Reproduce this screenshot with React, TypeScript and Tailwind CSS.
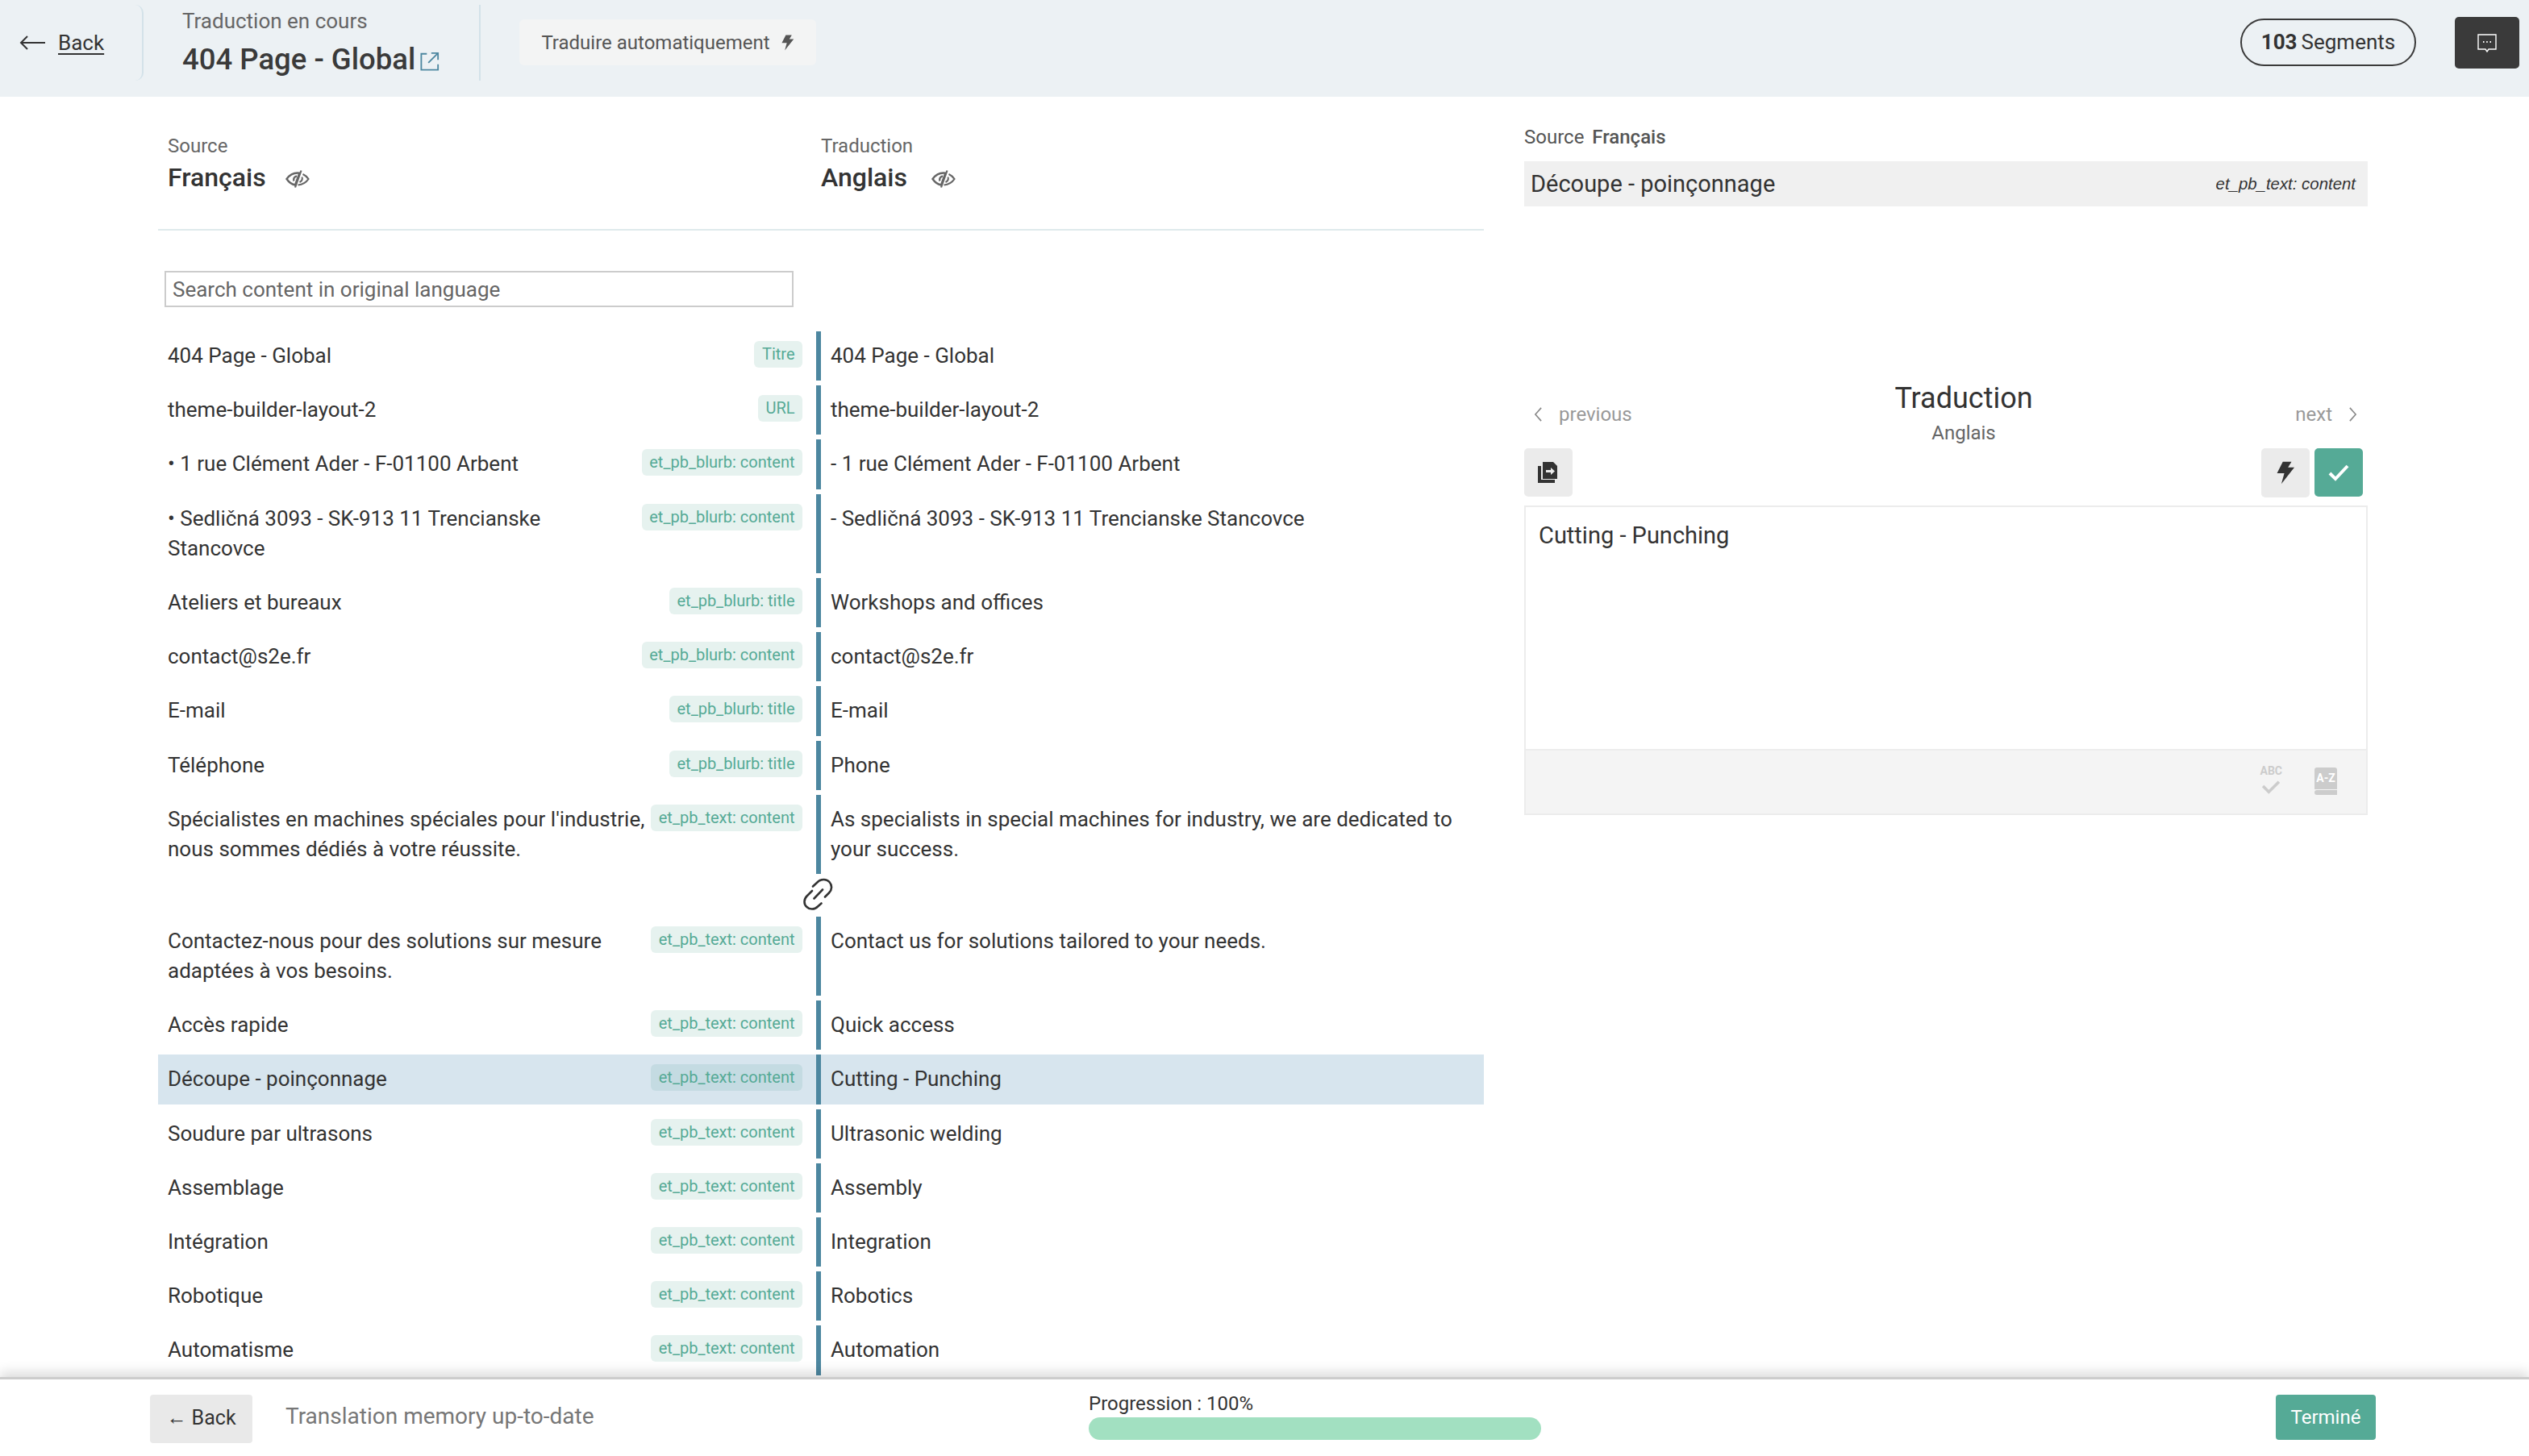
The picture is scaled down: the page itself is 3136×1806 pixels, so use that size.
import React from 'react';

type Row = { source: string; tag: string; target: string; selected?: boolean };

const rows: Row[] = [
    { source: '404 Page - Global', tag: 'Titre', target: '404 Page - Global' },
    { source: 'theme-builder-layout-2', tag: 'URL', target: 'theme-builder-layout-2' },
    { source: '• 1 rue Clément Ader - F-01100 Arbent', tag: 'et_pb_blurb: content', target: '- 1 rue Clément Ader - F-01100 Arbent' },
    { source: '• Sedličná 3093 - SK-913 11 Trencianske Stancovce', tag: 'et_pb_blurb: content', target: '- Sedličná 3093 - SK-913 11 Trencianske Stancovce' },
    { source: 'Ateliers et bureaux', tag: 'et_pb_blurb: title', target: 'Workshops and offices' },
    { source: 'contact@s2e.fr', tag: 'et_pb_blurb: content', target: 'contact@s2e.fr' },
    { source: 'E-mail', tag: 'et_pb_blurb: title', target: 'E-mail' },
    { source: 'Téléphone', tag: 'et_pb_blurb: title', target: 'Phone' },
    { source: "Spécialistes en machines spéciales pour l'industrie, nous sommes dédiés à votre réussite.", tag: 'et_pb_text: content', target: 'As specialists in special machines for industry, we are dedicated to your success.' },
];

const rowsAfterLink: Row[] = [
    { source: 'Contactez-nous pour des solutions sur mesure adaptées à vos besoins.', tag: 'et_pb_text: content', target: 'Contact us for solutions tailored to your needs.' },
    { source: 'Accès rapide', tag: 'et_pb_text: content', target: 'Quick access' },
    { source: 'Découpe - poinçonnage', tag: 'et_pb_text: content', target: 'Cutting - Punching', selected: true },
    { source: 'Soudure par ultrasons', tag: 'et_pb_text: content', target: 'Ultrasonic welding' },
    { source: 'Assemblage', tag: 'et_pb_text: content', target: 'Assembly' },
    { source: 'Intégration', tag: 'et_pb_text: content', target: 'Integration' },
    { source: 'Robotique', tag: 'et_pb_text: content', target: 'Robotics' },
    { source: 'Automatisme', tag: 'et_pb_text: content', target: 'Automation' },
];

const Bolt: React.FC<{ className?: string }> = ({ className }) => (
    <svg viewBox="0 0 21 27" className={className} fill="currentColor">
        <path d="M7 .7h10l-4 6.600h7.300L5.300 26.300 8.700 14H.3z" />
    </svg>
);

const EyeOff: React.FC<{ className?: string }> = ({ className }) => (
    <svg viewBox="0 0 30 24" className={`mt-[4px] h-[24px] w-[30px] text-[#666] ${className}`} fill="none" stroke="currentColor">
        <path d="M1.500 12C5 7 9.500 4.500 15 4.500c1 0 1.600.1 2.400.2L12 19.500C7.600 18.600 4.200 16 1.500 12z" strokeWidth="2.400" />
        <path d="M14 8.500c-3 .5-4.600 3-3.600 6" strokeWidth="2.400" />
        <path d="M21.500 6c3 1.400 5.300 3.500 7 6-3 4.500-7.500 7-13 7.500" strokeWidth="2.200" />
        <path d="M20.500 9.500c.8 2.500-.2 5-3 6.500" strokeWidth="2" />
        <path d="M19.500 1.500 12 22.500" strokeWidth="2.200" />
    </svg>
);

const Tag: React.FC<{ label: string; selected?: boolean }> = ({ label, selected }) => (
    <span className={`h-[33px] shrink-0 rounded-[6px] px-[9.500px] text-[20px] leading-[32px] text-[#55aa96] ${selected ? 'bg-[#c4dbe2]' : 'bg-[#e6f2ef]'}`}>
        {label}
    </span>
);

const SegmentRow: React.FC<{ row: Row }> = ({ row }) => (
    <div className={`mb-[6px] flex ${row.selected ? 'bg-[#d7e5ee]' : ''}`}>
        <div className="flex w-[816px] items-start gap-[4px] py-[12px] pl-[12px] pr-[17px]">
            <p className="flex-1 text-[26px] leading-[37.200px]">{row.source}</p>
            <Tag label={row.tag} selected={row.selected} />
        </div>
        <div className="flex-1 border-l-[6px] border-[#4d87a0] py-[12px] pl-[12px] pr-[36px]">
            <p className="text-[26px] leading-[37.200px]">{row.target}</p>
        </div>
    </div>
);

const App: React.FC = () => {
    return (
        <div className="flex h-[1806px] w-[3136px] flex-col overflow-hidden bg-white font-['Roboto',sans-serif] text-[#333]">
            <header className="flex h-[120px] shrink-0 items-start bg-[#ecf1f4]">
                <div className="mt-[6px] flex h-[94px] w-[178px] items-center rounded-r-[10px] border-r-2 border-[#d3e2e9] pl-[24px]">
                    <svg viewBox="0 0 32 20" className="h-[20px] w-[32px]" fill="none" stroke="#333" strokeWidth="2">
                        <path d="M32 10H2M10 2l-8 8 8 8" />
                    </svg>
                    <span className="ml-[16px] text-[26px] underline underline-offset-[4px]">Back</span>
                </div>
                <div className="mt-[6px] h-[94px] w-[418px] border-r-2 border-[#d3e2e9] pl-[48px]">
                    <p className="text-[26px] leading-[40px] text-[#666]">Traduction en cours</p>
                    <p className="mt-[4px] flex items-end text-[36.500px] font-medium leading-[48px] text-[#3a3a3a]">
                        404 Page - Global
                        <svg viewBox="0 0 26 26" className="mb-[10px] ml-[6px] h-[24px] w-[24px]" fill="none" stroke="#4d87a0" strokeWidth="2">
                            <path d="M9 3H1.500v21.500H24V17M11 15 24 2M15 2h9v9" />
                        </svg>
                    </p>
                </div>
                <button className="ml-[48px] mt-[24px] flex h-[57px] w-[368px] items-center justify-center rounded-[6px] bg-[#f3f4f4] text-[24px] text-[#555]">
                    Traduire automatiquement
                    <Bolt className="ml-[14px] h-[20px] w-[16px] text-[#555]" />
                </button>
                <div className="ml-auto mt-[23px] flex h-[59px] w-[218px] items-center justify-center rounded-full border-2 border-[#3a3a3a] text-[26px]">
                    <b className="font-bold">103</b>
                    <span className="ml-[5px]">Segments</span>
                </div>
                <button className="ml-[48px] mr-[12px] mt-[21px] flex h-[64px] w-[80px] items-center justify-center rounded-[5px] bg-[#3a3a3a]">
                    <svg viewBox="0 0 24 24" className="h-[24px] w-[24px]" fill="none" stroke="#fff" strokeWidth="1.400">
                        <path d="M1 2h22v18h-9l-2 3-2-3H1z" />
                        <path d="M7 11h1.500M11.200 11h1.500M15.500 11H17" strokeWidth="1.800" />
                    </svg>
                </button>
            </header>

            <main className="flex min-h-0 flex-1 overflow-hidden">
                <section className="ml-[196px] flex w-[1644px] flex-col">
                    <div className="flex h-[166px] shrink-0 border-b-2 border-[#dfeaec] pl-[12px] pt-[44px]">
                        <div className="w-[810px]">
                            <p className="text-[24px] leading-[34px] text-[#666]">Source</p>
                            <p className="flex items-center text-[32px] font-medium leading-[44px]">Français<EyeOff className="ml-[24px]" /></p>
                        </div>
                        <div>
                            <p className="text-[24px] leading-[34px] text-[#666]">Traduction</p>
                            <p className="flex items-center text-[32px] font-medium leading-[44px]">Anglais<EyeOff className="ml-[30px]" /></p>
                        </div>
                    </div>
                    <input
                        className="ml-[8px] mt-[50px] h-[45px] w-[780px] shrink-0 border-2 border-[#ccc] px-[8px] text-[26px] placeholder:text-[#666]"
                        placeholder="Search content in original language"
                    />
                    <div className="mt-[30px] min-h-0">
                        {rows.map((row) => (
                            <SegmentRow key={row.source} row={row} />
                        ))}
                        <div className="-mt-[6px] flex h-[52.500px] items-center pb-[2px] pl-[799px]">
                            <svg viewBox="0 0 40 40" className="h-[40px] w-[40px]" fill="none" stroke="#333" strokeWidth="2.600" strokeLinecap="round">
                                <path d="M13 10.500 19.500 4.500c4-3.500 10.500-3.500 14 .5 3.500 4 3.500 9.500-.5 13.500l-5 5" />
                                <path d="M12 16 5.500 22.500c-4 4-4 10 0 13.500 3.500 3.500 9.500 3.500 13.500-.5l4.500-4" />
                                <path d="M14.500 25.500 25 14.500" />
                            </svg>
                        </div>
                        {rowsAfterLink.map((row) => (
                            <SegmentRow key={row.source} row={row} />
                        ))}
                    </div>
                </section>

                <section className="ml-[50px] w-[1046px]">
                    <p className="pt-[33px] text-[24px] leading-[34px] text-[#555]">
                        Source <b className="ml-[4px] font-medium">Français</b>
                    </p>
                    <div className="mt-[13px] flex h-[56px] items-center justify-between bg-[#f0f0f0] pl-[8px] pr-[15px] pt-[1px]">
                        <span className="text-[29px]">Découpe - poinçonnage</span>
                        <span className="font-['Liberation_Sans',sans-serif] text-[20.400px] italic">et_pb_text: content</span>
                    </div>
                    <div className="mt-[215px] grid h-[85px] grid-cols-[1fr_auto_1fr]">
                        <div className="flex items-center gap-[20px] pl-[12px] text-[24px] text-[#999]">
                            <svg viewBox="0 0 12 20" className="h-[18px] w-[11px]" fill="none" stroke="#888" strokeWidth="1.800">
                                <path d="M10 1 2 10l8 9" />
                            </svg>
                            previous
                        </div>
                        <div className="pl-[44px] text-center">
                            <p className="text-[36px] leading-[46px]">Traduction</p>
                            <p className="mt-[3px] text-[24px] leading-[34px] text-[#666]">Anglais</p>
                        </div>
                        <div className="flex items-center justify-end gap-[20px] pr-[13px] text-[24px] text-[#999]">
                            next
                            <svg viewBox="0 0 12 20" className="h-[18px] w-[11px]" fill="none" stroke="#888" strokeWidth="1.800">
                                <path d="M2 1l8 9-8 9" />
                            </svg>
                        </div>
                    </div>
                    <div className="flex h-[71px] items-start justify-between pr-[6px]">
                        <button className="flex h-[60px] w-[60px] items-center justify-center rounded-[5px] bg-[#ebebeb]">
                            <svg viewBox="0 0 26 26" className="h-[26px] w-[26px]" fill="#333">
                                <path d="M0 5h4v17h17v4H0z" />
                                <path d="M6 0h13l5 5v16H6z" />
                                <path d="M10 10h6V7l5 4.500-5 4.500v-3h-6z" fill="#ebebeb" />
                            </svg>
                        </button>
                        <div className="flex gap-[6px]">
                            <button className="flex h-[61px] w-[60px] items-center justify-center rounded-[5px] bg-[#ebebeb]">
                                <Bolt className="h-[29px] w-[23px] text-[#333]" />
                            </button>
                            <button className="flex h-[60px] w-[60px] items-center justify-center rounded-[5px] bg-[#55aa96]">
                                <svg viewBox="0 0 26 22" className="h-[22px] w-[26px]" fill="none" stroke="#fff" strokeWidth="4">
                                    <path d="M2 12l7 7L24 3" />
                                </svg>
                            </button>
                        </div>
                    </div>
                    <div className="flex h-[384px] flex-col border-2 border-[#ececec]">
                        <p className="flex-1 px-[16px] pt-[15px] text-[29px] leading-[40px]">Cutting - Punching</p>
                        <div className="flex h-[80px] items-center justify-end gap-[40px] border-t-2 border-[#ececec] bg-[#f4f4f4] pb-[2px] pr-[36px]">
                            <div className="mb-[4px] flex flex-col items-center text-[#ccc]">
                                <span className="text-[14px] font-bold leading-[14px]">ABC</span>
                                <svg viewBox="0 0 26 20" className="mt-[4px] h-[18px] w-[24px]" fill="none" stroke="#ccc" strokeWidth="4">
                                    <path d="M2 9l8 8L24 3" />
                                </svg>
                            </div>
                            <div className="flex h-[34px] w-[28px] flex-col">
                                <span className="flex h-[27px] items-center justify-center rounded-t-[3px] bg-[#ccc] text-[14px] font-bold text-white">A-Z</span>
                                <span className="mt-[1px] h-[6px] rounded-l-[3px] bg-[#ccc]" />
                            </div>
                        </div>
                    </div>
                </section>
            </main>

            <footer className="z-10 flex h-[98px] shrink-0 items-start border-t-[3px] border-[#ccc] bg-white pl-[186px] shadow-[0_-6px_14px_rgba(0,0,0,0.14)]">
                <button className="mt-[19px] flex h-[60px] w-[127px] items-center justify-center rounded-[4px] bg-[#e9e9e9] pb-[2px] text-[25px]">
                    ← Back
                </button>
                <p className="ml-[41px] mt-[26px] w-[996px] text-[28px] leading-[40px] text-[#777]">Translation memory up-to-date</p>
                <div className="mt-[14px] w-[561px]">
                    <p className="text-[24px] leading-[33px]">Progression : 100%</p>
                    <div className="h-[28px] w-full rounded-full bg-[#a2e0c1]" />
                </div>
                <button className="ml-auto mr-[190px] mt-[19px] h-[56px] w-[124px] rounded-[4px] bg-[#55aa96] text-[24px] text-white">
                    Terminé
                </button>
            </footer>
        </div>
    );
};

export default App;
